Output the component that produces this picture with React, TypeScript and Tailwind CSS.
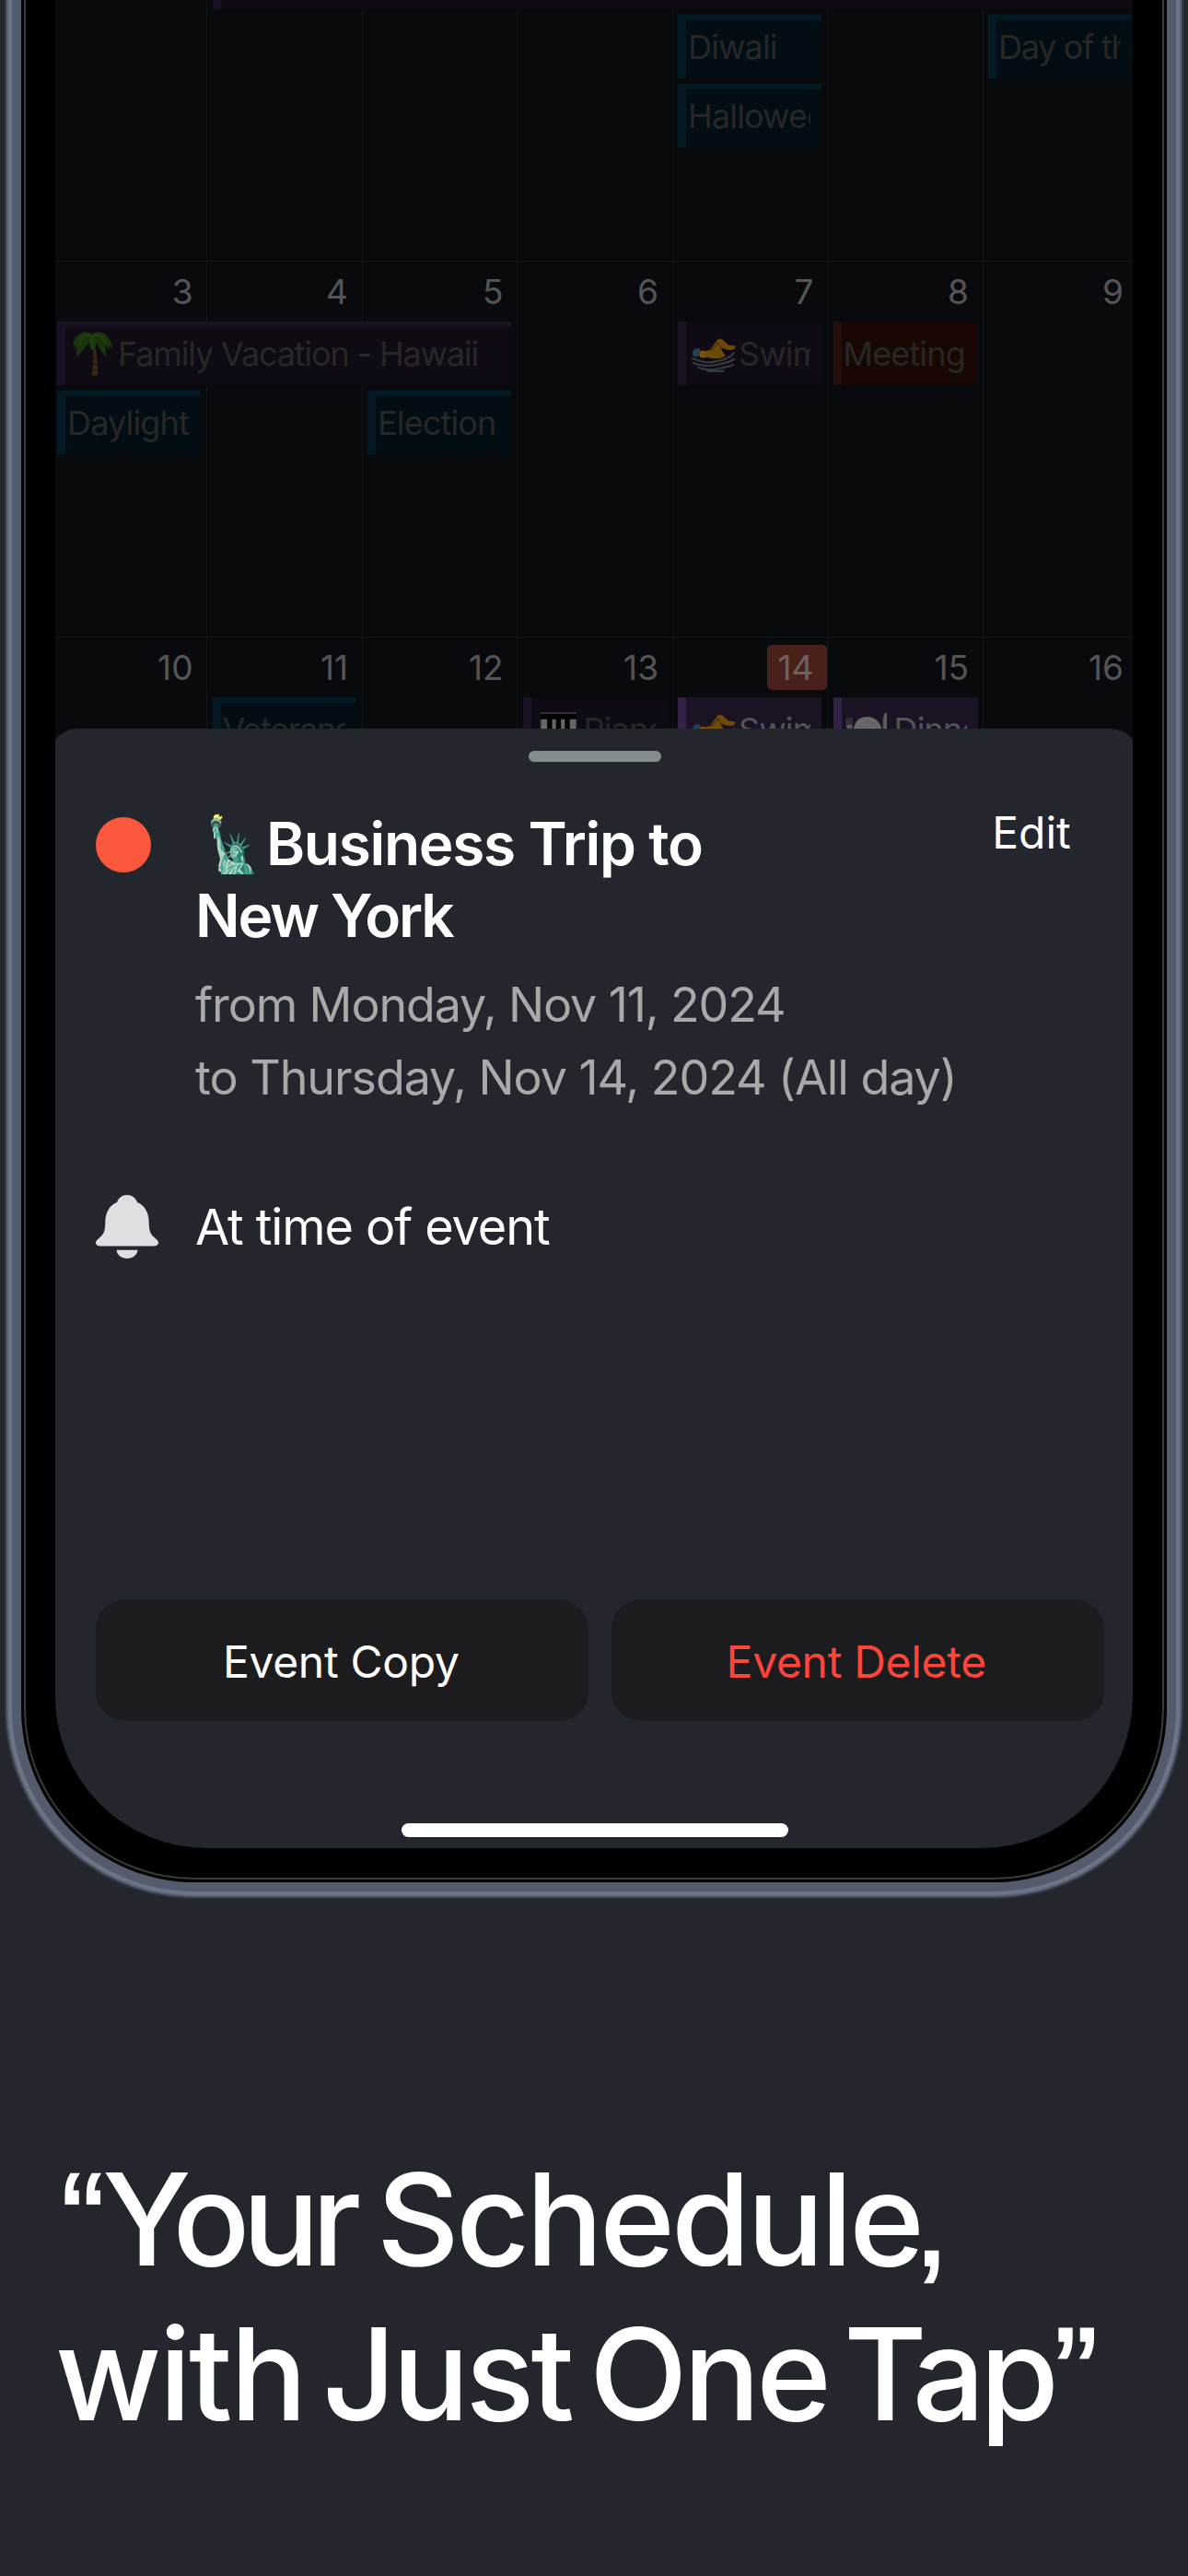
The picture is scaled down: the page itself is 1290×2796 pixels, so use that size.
import clsx from "clsx";
import type { ReactNode } from "react";

type Tone = "purple" | "purpleSpan" | "teal" | "red" | "violet";

interface CalendarEvent {
  title: string;
  icon?: ReactNode;
  tone: Tone;
  place: string;
  titleClass?: string;
}

interface WeekData {
  id: string;
  days: number[];
  today?: number;
  className?: string;
  events: CalendarEvent[];
}

const TONES: Record<Tone, string> = {
  purple: "bg-[#0f0a14] text-[#272727] shadow-[inset_9px_0_0_#1a1222]",
  purpleSpan: "bg-[#0f0a14] text-[#272727] shadow-[inset_9px_0_0_#1a1222,inset_0_6px_0_#1a1222]",
  teal: "bg-[#020e14] text-[#272727] shadow-[inset_9px_0_0_#031a24,inset_0_6px_0_#031a24]",
  red: "bg-[#180703] text-[#272727] shadow-[inset_9px_0_0_#270e0a]",
  violet: "bg-[#1b1223] text-[#555355] shadow-[inset_9px_0_0_#332246]",
};

const COLUMNS = ["col-start-1", "col-start-2", "col-start-3", "col-start-4", "col-start-5", "col-start-6", "col-start-7"];

function PalmIcon() {
  return (
    <svg viewBox="0 0 43 48" className="h-12 w-[43px]">
      <path d="M23 13C26 22 27.5 34 27 47.5H20.5C22.5 36 23 24 21.5 14Z" fill="#3a2812" />
      <path d="M21.7 28l4 2M21.5 34l5 2M21 40l5 2" stroke="#22170a" strokeWidth="1.2" />
      <path
        d="M21 3C25-1 35 0 38.5 6C41.5 10 43 15 42.5 19L39 14L39.5 20L35.5 15L36.5 27C31 24 29 17 26 12C25 16 24 19 21.5 20.5C19 19 18 16 17.5 12C14 17 9 21 5.5 28C3.5 24 3.5 20 5.5 16L1.5 20L3 14L.5 16C0 10 4 4 8 2.5C12-.5 18 0 21 3Z"
        fill="#1a340d"
      />
      <path d="M21 4C15 3 10 6 7 12M22 4C28 3 33 6 36 12M21 5C21 9 21.5 13 21.5 18" stroke="#234510" strokeWidth="1.6" fill="none" />
    </svg>
  );
}

function SwimmerIcon() {
  return (
    <svg viewBox="0 0 48 37" className="mt-[3px] h-[37px] w-12">
      <path d="M10 16C15 14 18 13.5 20 13L28 2C30 0 32 .5 34 2L40 7.5L47.5 8.5C48 11 46 13 42 13L36 12L31 9.5C33 14 35 17 37 19C33 23 25 23 18 21L11 21Z" fill="#6e4a08" />
      <path d="M21 14L29 5L31 9.5" stroke="#4e3304" strokeWidth="1.3" fill="none" />
      <circle cx="12" cy="17.5" r="4" fill="#7a5209" />
      <path d="M1 19C0 13 4 10 9 11.5C10 14 8.5 18 6 20.5Z" fill="#233f50" />
      <path
        d="M1 22C8 25 16 28 25 25.5C33 24 40 23 46 16M2 27C10 30 18 31 27 29C34 27.5 40 27 46 23M7 31.5C15 35 22 35 29 33C35 31.5 40 31.5 45 29M17 35.5C24 37 30 36 35 35.5"
        stroke="#343a42"
        strokeWidth="2.2"
        strokeLinecap="round"
        fill="none"
      />
    </svg>
  );
}

const WEEKS: WeekData[] = [
  {
    id: "oct-27",
    days: [],
    className: "-mt-[124px]",
    events: [
      { title: "", tone: "purpleSpan", place: "row-start-2 col-start-2 col-span-6 ml-[5.5px] mr-px" },
      { title: "Diwali", tone: "teal", place: "row-start-3 col-start-5 ml-[5.5px] mr-[7px]" },
      { title: "Halloween", tone: "teal", place: "row-start-4 col-start-5 ml-[5.5px] mr-[7px]" },
      {
        title: "Day of the Dead",
        tone: "teal",
        place: "row-start-3 col-start-7 ml-[5.5px] mr-px",
        titleClass: "tracking-[-1.3px]",
      },
    ],
  },
  {
    id: "nov-3",
    days: [3, 4, 5, 6, 7, 8, 9],
    events: [
      {
        title: "Family Vacation - Hawaii",
        icon: <PalmIcon />,
        tone: "purpleSpan",
        place: "row-start-2 col-start-1 col-span-3 ml-[2px] mr-[7px]",
        titleClass: "tracking-[-1.15px]",
      },
      { title: "Daylight Saving", tone: "teal", place: "row-start-3 col-start-1 ml-[2px] mr-[7px]" },
      { title: "Election", tone: "teal", place: "row-start-3 col-start-3 ml-[5.5px] mr-[7px]" },
      { title: "Swimming", icon: <SwimmerIcon />, tone: "purple", place: "row-start-2 col-start-5 ml-[5.5px] mr-[7px]" },
      { title: "Meeting", tone: "red", place: "row-start-2 col-start-6 ml-[5.5px] mr-[6px]" },
    ],
  },
  {
    id: "nov-10",
    days: [10, 11, 12, 13, 14, 15, 16],
    today: 14,
    events: [
      {
        title: "Veterans Day",
        tone: "teal",
        place: "row-start-2 col-start-2 ml-[5.5px] mr-[7px]",
        titleClass: "tracking-[-1.3px]",
      },
      {
        title: "Piano",
        icon: <span className="brightness-[.4]">🎹</span>,
        tone: "purple",
        place: "row-start-2 col-start-4 ml-[5.5px] mr-[7px]",
      },
      { title: "Swimming", icon: <SwimmerIcon />, tone: "violet", place: "row-start-2 col-start-5 ml-[5.5px] mr-[7px]" },
      {
        title: "Dinner",
        icon: <span className="pr-[3px] text-[41px] brightness-[.42]">🍽️</span>,
        tone: "violet",
        place: "row-start-2 col-start-6 ml-[5.5px] mr-[6px]",
      },
    ],
  },
];

function EventChip({ title, icon, tone, place, titleClass }: CalendarEvent) {
  return (
    <div className={clsx("flex h-[69px] overflow-hidden pl-[11px] pr-3 text-[36px] leading-[70px]", TONES[tone], place)}>
      <div className="flex min-w-0 overflow-hidden whitespace-nowrap">
        {icon && <span className="flex h-[69px] w-[55px] shrink-0 items-center justify-center">{icon}</span>}
        <span className={titleClass ?? "tracking-[-0.85px]"}>{title}</span>
      </div>
    </div>
  );
}

function Week({ days, today, className, events }: WeekData) {
  return (
    <div
      className={clsx(
        "grid h-[408px] shrink-0 grid-cols-[165px_168.5px_168.5px_168.5px_168.5px_168.5px_1fr] grid-rows-[65px_75px_75px_75px_1fr] border-b border-[#151618]",
        className
      )}
    >
      {COLUMNS.map((column, i) => (
        <div key={column} className={clsx("row-start-1 row-end-[-1] flex justify-end", column, i < 6 && "border-r border-[#151618]")}>
          {days[i] && (
            <span
              className={clsx(
                "mt-2 h-[49px] text-[37px] leading-[49px]",
                i === 6 ? "pr-[10px]" : "pr-[14.5px]",
                days[i] === today ? "w-[65px] rounded-[5px] bg-[#4a201b] text-right text-[#6b625f]" : "text-[#555555]"
              )}
            >
              {days[i]}
            </span>
          )}
        </div>
      ))}
      {events.map((event) => (
        <EventChip key={event.place} {...event} />
      ))}
    </div>
  );
}

function BellIcon() {
  return (
    <svg viewBox="0 0 68 69" className="mt-[5px] h-[69px] w-[68px] shrink-0 fill-[#dedfe1]">
      <path d="M34 0C29 0 24.5 3 23 8C15 11 10.5 19 10.3 29C10.2 40 8.5 42.5 4 46.5C1.5 48.7 0 50 0 52C0 54.2 2 55.5 5 55.5H63C66 55.5 68 54.2 68 52C68 50 66.5 48.7 64 46.5C59.5 42.5 57.8 40 57.7 29C57.5 19 53 11 45 8C43.5 3 39 0 34 0Z" />
      <path d="M22.5 59.7H45.5C45 65 40 69 34 69S23 65 22.5 59.7Z" />
    </svg>
  );
}

function EventSheet() {
  return (
    <div className="-mx-[6px] flex h-[1215px] shrink-0 flex-col rounded-t-[30px] bg-[#24262e] text-white">
      <div className="mt-6 ml-[520px] h-3 w-36 rounded-full bg-[#848c8f]" />

      {/* Title and dates */}
      <div className="mt-[50px] flex pl-[50px] pr-[73px]">
        <div className="mt-[10px] h-[60px] w-[60px] shrink-0 rounded-full bg-[#fc583d]" />
        <div className="ml-12 flex-1">
          <h2 className="text-[64px] font-semibold leading-[78px] whitespace-nowrap">
            <span className="flex tracking-[-1.35px]">
              <span className="flex w-[77px] shrink-0 justify-center pl-[4px] text-[58px]">
                <span className="scale-x-80">🗽</span>
              </span>
              Business Trip to
            </span>
            <span className="block tracking-[-2.1px]">New York</span>
          </h2>
          <p className="mt-[18px] text-[52px] leading-[79px] whitespace-nowrap text-[#a9a9a9]">
            <span className="block tracking-[-1.15px]">from Monday, Nov 11, 2024</span>
            <span className="block tracking-[-1.06px]">to Thursday, Nov 14, 2024 (All day)</span>
          </p>
        </div>
        <button className="-mt-[3px] h-[60px] w-[86px] shrink-0 text-[48px] leading-[60px]">Edit</button>
      </div>

      {/* Reminder */}
      <div className="mt-[83px] flex gap-10 pl-[50px]">
        <BellIcon />
        <p className="text-[54px] leading-[80px] tracking-[-1.1px]">At time of event</p>
      </div>

      {/* Actions */}
      <div className="mt-auto flex gap-[25px] pl-[50px] pr-[37px] text-[48px] tracking-[-0.3px]">
        <button className="h-[132px] flex-1 rounded-[32px] bg-[#1c1c1e] pt-[3px] pr-[2px]">Event Copy</button>
        <button className="h-[132px] flex-1 rounded-[32px] bg-[#1c1c1e] pt-[3px] pr-[3px] text-[#ff453a]">Event Delete</button>
      </div>

      <div className="mt-[111px] mb-3 ml-[382px] h-[15px] w-[420px] rounded-full bg-white" />
    </div>
  );
}

function Phone() {
  return (
    <div className="mx-[5px] rounded-b-[206px] bg-[#343a44] px-[2px] pb-[2px]">
      <div className="rounded-b-[204px] bg-[#586071] px-[2px] pb-[2px]">
        <div className="rounded-b-[202px] bg-[#6c7485] px-1 pb-1">
          <div className="rounded-b-[198px] bg-[#545b6c] px-[10px] pb-[10px]">
            <div className="rounded-b-[188px] bg-black px-[3px] pb-[3px]">
              <div className="rounded-b-[185px] bg-[#3a3a3a] px-[2px] pb-[2px]">
                <div className="rounded-b-[183px] bg-black px-8 pb-8">
                  <div className="flex h-[2006px] flex-col overflow-hidden rounded-b-[165px] bg-[#090a0e]">
                    <div className="h-[791px] shrink-0 overflow-hidden">
                      <div className="flex flex-col">
                        {WEEKS.map((week) => (
                          <Week key={week.id} {...week} />
                        ))}
                      </div>
                    </div>
                    <EventSheet />
                  </div>
                </div>
              </div>
            </div>
          </div>
        </div>
      </div>
    </div>
  );
}

function Punctuation({ children }: { children: ReactNode }) {
  return (
    <span className="font-['Liberation_Sans',sans-serif] text-[144px] font-normal tracking-normal [-webkit-text-stroke:1.5px_white]">
      {children}
    </span>
  );
}

export default function App() {
  return (
    <div className="flex h-[2796px] w-[1290px] flex-col overflow-hidden bg-[#23262d] font-['Inter','Liberation_Sans',sans-serif]">
      <Phone />
      <h1 className="mt-[264px] text-[139px] font-medium leading-[168px] whitespace-nowrap text-white">
        <span className="flex h-[168px] items-baseline pl-[66px]">
          <Punctuation>“</Punctuation>
          <span className="-ml-[3px] w-[298px] tracking-[-8.2px]">Your</span>
          <span className="w-[582.5px] tracking-[-3.8px]">Schedule</span>
          <Punctuation>,</Punctuation>
        </span>
        <span className="flex h-[168px] items-baseline pl-[60px]">
          <span className="w-[290px] tracking-[-2.6px]">with</span>
          <span className="w-[290px] tracking-[-4px]">Just</span>
          <span className="w-[276px] tracking-[-4.5px]">One</span>
          <span className="w-[228.5px] tracking-[-5.8px]">Tap</span>
          <Punctuation>”</Punctuation>
        </span>
      </h1>
    </div>
  );
}
